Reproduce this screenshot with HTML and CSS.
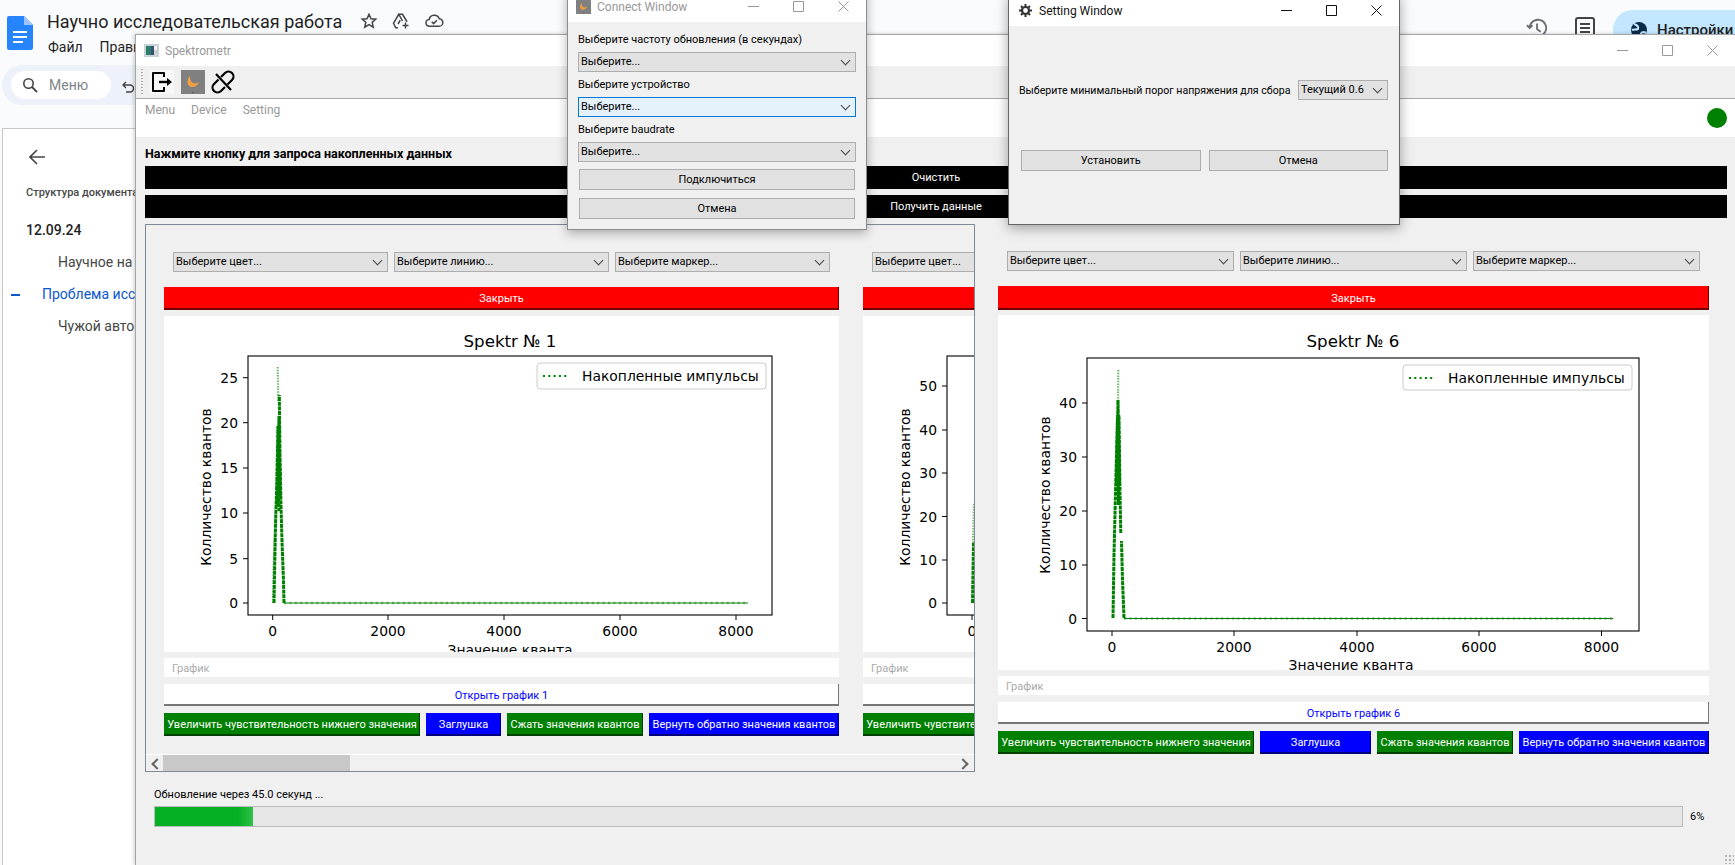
FILE: index.html
```html
<!DOCTYPE html>
<html lang="ru">
<head>
    <meta charset="UTF-8">
    <meta name="viewport" content="width=device-width, initial-scale=1.0">
    <title>Spektrometr</title>
    <link rel="stylesheet" href="styles.css">
</head>
<body>
    <svg class="defs" width="0" height="0">
        <symbol id="ctl-min" viewBox="0 0 11 11"><path d="M0 5.5h11" stroke="currentColor" fill="none"/></symbol>
        <symbol id="ctl-max" viewBox="0 0 11 11"><path d="M.5.5h10v10H.5z" stroke="currentColor" fill="none"/></symbol>
        <symbol id="ctl-close" viewBox="0 0 11 11"><path d="M.5.5l10 10M10.5.5l-10 10" stroke="currentColor" fill="none"/></symbol>
        <symbol id="app-logo" viewBox="0 0 24 24">
            <rect width="24" height="24" fill="#808080"/>
            <path d="M9 6c-4 4-3 11 2 11 3 0 6-2 7-5-2 1-4 2-6 1-2-1-3-3-3-7z" fill="#f0a040"/>
            <circle cx="12" cy="22.500" r="1" fill="#666"/>
        </symbol>
    </svg>

    <!-- Google Docs behind the windows -->
    <div class="docs">
        <div class="docs-head">
            <svg class="docs-logo" width="26" height="34" viewBox="0 0 26 34">
                <path d="M2 0h15l9 9v23a2 2 0 0 1-2 2H2a2 2 0 0 1-2-2V2a2 2 0 0 1 2-2z" fill="#2684fc"/>
                <path d="M17 0l9 9h-9z" fill="#a1c2fa"/>
                <path d="M6 16h14M6 21h14M6 26h10" stroke="#fff" stroke-width="2"/>
            </svg>
            <div class="docs-titles">
                <div class="docs-title-row">
                    <span class="docs-title">Научно исследовательская работа</span>
                    <svg class="docs-icon" width="18" height="18" viewBox="0 0 24 24"><path d="M12 3l2.7 6 6.3.6-4.8 4.2 1.5 6.4L12 16.8 6.300 20.200l1.500-6.400L3 9.600 9.300 9z" fill="none" stroke="#444" stroke-width="2"/></svg>
                    <svg class="docs-icon" width="20" height="18" viewBox="0 0 24 24"><path d="M9 3h5l6 10M8 21H5l-3-6L9 3l5 9M8 16l3-5" fill="none" stroke="#444" stroke-width="2"/><path d="M18 14v8M14 18h8" stroke="#444" stroke-width="2"/></svg>
                    <svg class="docs-icon" width="20" height="18" viewBox="0 0 24 24"><path d="M6 19a4.500 4.500 0 0 1-.5-9A7 7 0 0 1 19 9a5 5 0 0 1-.5 10z" fill="none" stroke="#444" stroke-width="2"/><path d="M9 13l2.500 2.500L16 11" fill="none" stroke="#444" stroke-width="2"/></svg>
                </div>
                <div class="docs-menu">
                    <span>Файл</span>
                    <span>Правка</span>
                </div>
            </div>
            <div class="docs-actions">
                <svg class="action-history" width="22" height="22" viewBox="0 0 24 24"><path d="M4 12a9 9 0 1 1 3 6.700M1 9l3 3 3-3M12 7v6l4 3" fill="none" stroke="#6b6f73" stroke-width="2"/></svg>
                <svg class="action-notes" width="20" height="22" viewBox="0 0 20 22"><rect x="1" y="1" width="18" height="20" rx="2" fill="none" stroke="#444" stroke-width="2"/><path d="M5 7h10M5 11h10M5 15h10" stroke="#444" stroke-width="2"/></svg>
                <div class="share-pill">
                    <svg width="18" height="18" viewBox="0 0 18 18"><circle cx="9" cy="9" r="8" fill="#0b2a4a"/><path d="M4 3c3 1 5 2 4 5-2 1-4 0-6 1M11 16c-1-3 0-5 3-5l2 1" fill="none" stroke="#c2e7ff" stroke-width="2"/></svg>
                    <span>Настройки</span>
                </div>
            </div>
        </div>
        <div class="docs-toolbar">
            <div class="docs-search">
                <svg width="16" height="16" viewBox="0 0 16 16"><circle cx="6.500" cy="6.500" r="4.700" fill="none" stroke="#444" stroke-width="1.600"/><path d="M10 10l5 5" stroke="#444" stroke-width="1.800"/></svg>
                <span>Меню</span>
            </div>
            <svg class="docs-undo" width="13" height="13" viewBox="0 0 13 13"><path d="M4 1L1 4l3 3M1 4h7a3.500 3.500 0 0 1 0 7H4" fill="none" stroke="#444" stroke-width="1.400"/></svg>
        </div>
        <div class="docs-side">
            <svg class="docs-back" width="16" height="16" viewBox="0 0 16 16"><path d="M8 1L1 8l7 7M1 8h15" fill="none" stroke="#444" stroke-width="1.600"/></svg>
            <div class="outline-head">Структура документа</div>
            <div class="outline-date">12.09.24</div>
            <div class="outline-item">Научное на</div>
            <div class="outline-item outline-active">Проблема исс</div>
            <div class="outline-item">Чужой авто</div>
        </div>
    </div>

    <!-- Main window -->
    <div class="win win-main">
        <div class="win-title">
            <svg class="win-icon" width="15" height="13" viewBox="0 0 15 13">
                <rect width="15" height="13" fill="#c9d2d6"/>
                <rect x="2" y="2" width="5" height="9" fill="#2a7f6a"/>
                <rect x="7" y="2" width="3" height="9" fill="#39506e"/>
                <rect x="10" y="2" width="3" height="4" fill="#f2f2f2"/>
            </svg>
            <span class="win-name">Spektrometr</span>
            <div class="win-ctls">
                <svg><use href="#ctl-min"/></svg>
                <svg><use href="#ctl-max"/></svg>
                <svg><use href="#ctl-close"/></svg>
            </div>
        </div>
        <div class="toolbar">
            <div class="tool-grip"></div>
            <div class="tool-btn">
                <svg width="22" height="22" viewBox="0 0 22 22"><path d="M13 6V2H2v18h11v-4" fill="none" stroke="#000" stroke-width="2" stroke-linejoin="round"/><path d="M8 11h9" stroke="#000" stroke-width="2.400"/><path d="M16 7l5 4-5 4z" fill="#000"/></svg>
            </div>
            <svg class="tool-logo" width="24" height="24"><use href="#app-logo"/></svg>
            <svg class="tool-link" width="24" height="24" viewBox="0 0 24 24">
                <path d="M10 7l4-4a4.700 4.700 0 0 1 7 7l-4.500 4.500M14 17l-4 4a4.700 4.700 0 0 1-7-7l4.500-4.500" fill="none" stroke="#000" stroke-width="2.200"/>
                <path d="M5 4l15 16" stroke="#000" stroke-width="2.200"/>
            </svg>
        </div>
        <div class="menubar">
            <span>Menu</span>
            <span>Device</span>
            <span>Setting</span>
            <div class="status-dot"></div>
        </div>

        <div class="content">
            <div class="hint">Нажмите кнопку для запроса накопленных данных</div>
            <button class="btn-black">Очистить</button>
            <button class="btn-black">Получить данные</button>

            <div class="panes">
                <div class="scroll-panel">
                    <div class="scroll-view">
                        <div class="card">
                            <div class="combo-row">
                                <div class="combo">Выберите цвет...</div>
                                <div class="combo">Выберите линию...</div>
                                <div class="combo">Выберите маркер...</div>
                            </div>
                            <button class="btn-red">Закрыть</button>
                            <div class="plot plot-short">
                                <svg width="675" height="336" viewBox="0 0 675 336">
                                    <text class="plot-title" x="346" y="31">Spektr № 1</text>
                                    <path class="ticks" d="M79 287h5M79 242.700h5M79 197h5M79 152h5M79 106.700h5M79 61.700h5M108.700 299v5M224 299v5M340 299v5M456 299v5M572 299v5"/>
                                    <g class="ytick">
                                        <text x="74" y="292">0</text>
                                        <text x="74" y="248">5</text>
                                        <text x="74" y="202">10</text>
                                        <text x="74" y="157">15</text>
                                        <text x="74" y="112">20</text>
                                        <text x="74" y="67">25</text>
                                    </g>
                                    <g class="xtick">
                                        <text x="108.700" y="320">0</text>
                                        <text x="224" y="320">2000</text>
                                        <text x="340" y="320">4000</text>
                                        <text x="456" y="320">6000</text>
                                        <text x="572" y="320">8000</text>
                                    </g>
                                    <text class="axis-label" x="346" y="339">Значение кванта</text>
                                    <text class="axis-label" transform="translate(47 171) rotate(-90)">Колличество квантов</text>
                                    <polyline class="line-faint" points="113.700,51 114.300,85"/>
                                    <polyline class="line-faint" points="109,287 109.500,255 112,190 113.500,110"/>
                                    <polyline class="line-heavy" points="110,287 110.500,260 111.500,210 113,160 114,110"/>
                                    <polyline class="line-heavy" points="120,287 119.500,265 118,225 117,190 116,140 115.300,79"/>
                                    <polyline class="line-heavy" points="113.500,190 115,100 116,180 114.500,130 115,195"/>
                                    <path class="line-base" d="M120 287H584"/>
                                    <path class="line-dots" d="M120 287H584"/>
                                    <rect class="axes" x="84" y="40" width="524" height="259"/>
                                    <rect class="legend-box" x="373" y="47" width="229" height="26" rx="3"/>
                                    <path class="legend-line" d="M379 60h24"/>
                                    <text class="legend-text" x="418" y="65">Накопленные импульсы</text>
                                </svg>
                            </div>
                            <div class="tab-bar"><span class="tab">График</span></div>
                            <button class="btn-open">Открыть график 1</button>
                            <div class="action-row">
                                <button class="act act-green act-long">Увеличить чувствительность нижнего значения</button>
                                <button class="act act-blue act-fill">Заглушка</button>
                                <button class="act act-green act-squeeze">Сжать значения квантов</button>
                                <button class="act act-blue act-back">Вернуть обратно значения квантов</button>
                            </div>
                        </div>

                        <!-- only the left edge of this card shows before the panel clips it -->
                        <div class="card">
                            <div class="combo-row">
                                <div class="combo">Выберите цвет...</div>
                            </div>
                            <button class="btn-red"></button>
                            <div class="plot plot-short">
                                <svg width="675" height="336" viewBox="0 0 675 336">
                                    <path class="ticks" d="M79 287h5M79 244h5M79 200.500h5M79 157h5M79 114h5M79 70h5M109 299v5"/>
                                    <g class="ytick">
                                        <text x="74" y="292">0</text>
                                        <text x="74" y="249">10</text>
                                        <text x="74" y="206">20</text>
                                        <text x="74" y="162">30</text>
                                        <text x="74" y="119">40</text>
                                        <text x="74" y="75">50</text>
                                    </g>
                                    <g class="xtick">
                                        <text x="109" y="320">0</text>
                                    </g>
                                    <text class="axis-label" transform="translate(47 171) rotate(-90)">Колличество квантов</text>
                                    <polyline class="line-faint" points="110,227 111,187"/>
                                    <polyline class="line-heavy" points="109.500,287 110.500,227"/>
                                    <rect class="axes" x="84" y="40" width="524" height="259"/>
                                </svg>
                            </div>
                            <div class="tab-bar"><span class="tab">График</span></div>
                            <button class="btn-open"></button>
                            <div class="action-row">
                                <button class="act act-green act-long">Увеличить чувствительность нижнего значения</button>
                            </div>
                        </div>
                    </div>
                    <div class="scrollbar">
                        <span class="arrow arrow-left"></span>
                        <div class="thumb"></div>
                        <span class="arrow arrow-right"></span>
                    </div>
                </div>

                <div class="card card-wide">
                    <div class="combo-row">
                        <div class="combo">Выберите цвет...</div>
                        <div class="combo">Выберите линию...</div>
                        <div class="combo">Выберите маркер...</div>
                    </div>
                    <button class="btn-red btn-red-tall">Закрыть</button>
                    <div class="plot plot-tall">
                        <svg width="711" height="355" viewBox="0 0 711 355">
                            <text class="plot-title" x="355" y="32">Spektr № 6</text>
                            <path class="ticks" d="M84 303.500h5M84 250h5M84 196h5M84 142h5M84 88h5M114 316v5M236 316v5M359 316v5M481 316v5M603.500 316v5"/>
                            <g class="ytick">
                                <text x="79" y="309">0</text>
                                <text x="79" y="255">10</text>
                                <text x="79" y="201">20</text>
                                <text x="79" y="147">30</text>
                                <text x="79" y="93">40</text>
                            </g>
                            <g class="xtick">
                                <text x="114" y="337">0</text>
                                <text x="236" y="337">2000</text>
                                <text x="359" y="337">4000</text>
                                <text x="481" y="337">6000</text>
                                <text x="603.500" y="337">8000</text>
                            </g>
                            <text class="axis-label" x="353" y="355">Значение кванта</text>
                            <text class="axis-label" transform="translate(52 180) rotate(-90)">Колличество квантов</text>
                            <polyline class="line-faint" points="120.300,55 120,90"/>
                            <polyline class="line-heavy" points="115,303 116,240 117.500,178 119.500,100"/>
                            <polyline class="line-heavy" points="126,303 124.500,265 123.500,226"/>
                            <polyline class="line-heavy" points="122.800,218 122,178 121,100"/>
                            <polyline class="line-heavy" points="118.500,170 120,85 121.500,170 119.500,120 120.500,190 120,140"/>
                            <path class="line-base" d="M126 303.500H615"/>
                            <path class="line-dots" d="M126 303.500H615"/>
                            <rect class="axes" x="89" y="43" width="552" height="273"/>
                            <rect class="legend-box" x="405" y="50" width="229" height="25" rx="3"/>
                            <path class="legend-line" d="M411 63h24"/>
                            <text class="legend-text" x="450" y="68">Накопленные импульсы</text>
                        </svg>
                    </div>
                    <div class="tab-bar"><span class="tab">График</span></div>
                    <button class="btn-open">Открыть график 6</button>
                    <div class="action-row">
                        <button class="act act-green act-long">Увеличить чувствительность нижнего значения</button>
                        <button class="act act-blue act-fill">Заглушка</button>
                        <button class="act act-green act-squeeze">Сжать значения квантов</button>
                        <button class="act act-blue act-back">Вернуть обратно значения квантов</button>
                    </div>
                </div>
            </div>

            <div class="update-text">Обновление через 45.0 секунд ...</div>
            <div class="progress-row">
                <div class="progress"><div class="progress-fill" style="width: 6.4%"></div></div>
                <span class="progress-value">6%</span>
            </div>
        </div>
        <div class="size-grip"></div>
    </div>

    <!-- Connect window -->
    <div class="win win-connect">
        <div class="win-title">
            <svg class="win-icon" width="15" height="15"><use href="#app-logo"/></svg>
            <span class="win-name">Connect Window</span>
            <div class="win-ctls">
                <svg><use href="#ctl-min"/></svg>
                <svg><use href="#ctl-max"/></svg>
                <svg><use href="#ctl-close"/></svg>
            </div>
        </div>
        <div class="connect-body">
            <div class="form-label">Выберите частоту обновления (в секундах)</div>
            <div class="combo">Выберите...</div>
            <div class="form-label">Выберите устройство</div>
            <div class="combo combo-focus">Выберите...</div>
            <div class="form-label">Выберите baudrate</div>
            <div class="combo">Выберите...</div>
            <button class="btn-plain connect-ok">Подключиться</button>
            <button class="btn-plain connect-cancel">Отмена</button>
        </div>
    </div>

    <!-- Setting window -->
    <div class="win win-setting">
        <div class="win-title">
            <svg class="win-icon" width="15" height="15" viewBox="0 0 15 15">
                <circle cx="7.500" cy="7.500" r="3.500" fill="none" stroke="#333" stroke-width="2.200"/>
                <path d="M7.500 1v2.500M7.500 11.500V14M1 7.500h2.500M11.500 7.500H14M3 3l1.700 1.700M10.300 10.300L12 12M12 3l-1.700 1.700M4.700 10.300L3 12" stroke="#333" stroke-width="2"/>
            </svg>
            <span class="win-name">Setting Window</span>
            <div class="win-ctls">
                <svg><use href="#ctl-min"/></svg>
                <svg><use href="#ctl-max"/></svg>
                <svg><use href="#ctl-close"/></svg>
            </div>
        </div>
        <div class="setting-body">
            <div class="setting-row">
                <span class="setting-label">Выберите минимальный порог напряжения для сбора</span>
                <div class="combo combo-small">Текущий 0.6</div>
            </div>
            <div class="setting-btns">
                <button class="btn-plain">Установить</button>
                <button class="btn-plain">Отмена</button>
            </div>
        </div>
    </div>
</body>
</html>
```

FILE: styles.css
```css
* {
    box-sizing: border-box;
}
html, body {
    height: 100%;
}
body {
    margin: 0;
    position: relative;
    overflow: hidden;
    background-color: #f9fbfd;
    font-family: Roboto, "Liberation Sans", sans-serif;
    font-size: 11px;
    color: #000;
}
button {
    font-family: inherit;
    font-size: 11px;
    padding: 0;
    border: none;
}
.defs {
    position: absolute;
}

/* Google Docs behind */
.docs {
    height: 100%;
    display: flex;
    flex-direction: column;
    color: #1f1f1f;
}
.docs-head {
    display: flex;
    height: 65px;
    padding: 16px 0 0 7px;
}
.docs-logo {
    flex: none;
}
.docs-titles {
    margin-left: 14px;
    margin-top: -8px;
}
.docs-title-row {
    display: flex;
    align-items: center;
    height: 26px;
}
.docs-title {
    font-size: 18px;
    margin-right: 18px;
}
.docs-icon {
    margin-right: 13px;
}
.docs-menu {
    display: flex;
    gap: 17px;
    margin-top: 3px;
    padding-left: 1px;
    font-size: 14px;
    line-height: 20px;
}
.docs-actions {
    position: absolute;
    top: 10px;
    left: 1526px;
    right: 0;
    display: flex;
    align-items: flex-start;
}
.action-history {
    margin-top: 7px;
}
.action-notes {
    margin: 7px 0 0 27px;
}
.share-pill {
    display: flex;
    align-items: center;
    gap: 9px;
    height: 40px;
    margin-left: 18px;
    padding-left: 17px;
    flex: 1;
    border-radius: 20px 0 0 20px;
    background-color: #c2e7ff;
    font-size: 15px;
    font-weight: 500;
    white-space: nowrap;
    overflow: hidden;
}
.docs-toolbar {
    display: flex;
    align-items: center;
    height: 40px;
    margin-left: 2px;
    padding-left: 9px;
    border-radius: 20px 0 0 20px;
    background-color: #edf2fa;
}
.docs-search {
    display: flex;
    align-items: center;
    gap: 11px;
    width: 100px;
    height: 28px;
    padding-left: 11px;
    border-radius: 14px;
    background-color: #fff;
    font-size: 14px;
    color: #80868b;
}
.docs-undo {
    margin-left: 11px;
    margin-top: 4px;
}
.docs-side {
    flex: 1;
    margin: 23px 0 0 2px;
    border: 1px solid #c7c7c7;
    border-bottom: none;
    background-color: #fff;
    padding: 20px 0 0 23px;
    white-space: nowrap;
}
.docs-back {
    display: block;
    margin-left: 3px;
}
.outline-head {
    margin-top: 21px;
    font-size: 11px;
    font-weight: 500;
    color: #444746;
}
.outline-date {
    margin-top: 23px;
    font-size: 14px;
    font-weight: 500;
    line-height: 16px;
}
.outline-item {
    position: relative;
    margin: 16px 0 0 32px;
    font-size: 14px;
    line-height: 16px;
    color: #444746;
}
.outline-active {
    margin-left: 16px;
    color: #0b57d0;
}
.outline-active::before {
    content: "";
    position: absolute;
    left: -31px;
    top: 8px;
    width: 9px;
    height: 2px;
    background-color: #0b57d0;
}

/* Windows */
.win {
    position: absolute;
    display: flex;
    flex-direction: column;
    background-color: #f0f0f0;
    border: 1px solid #8c8c8c;
}
.win-main {
    left: 135px;
    top: 34px;
    right: 0;
    bottom: 0;
    border-color: #a6a6a6;
    border-right: none;
    border-bottom: none;
    box-shadow: -1px 0 4px rgba(0, 0, 0, 0.2);
}
.win-connect {
    left: 567px;
    top: -10px;
    width: 300px;
    height: 240px;
    box-shadow: 0 3px 10px rgba(0, 0, 0, 0.3);
}
.win-setting {
    left: 1008px;
    top: -6px;
    width: 392px;
    height: 231px;
    border-color: #666;
    box-shadow: 0 3px 12px rgba(0, 0, 0, 0.35);
}
.win-title {
    display: flex;
    align-items: center;
    flex: none;
    height: 31px;
    padding-left: 8px;
    background-color: #fff;
}
.win-icon {
    flex: none;
    margin-right: 6px;
}
.win-name {
    font-size: 12px;
    color: #999;
}
.win-ctls {
    display: flex;
    margin-left: auto;
    color: #999;
}
.win-ctls svg {
    width: 45px;
    height: 11px;
}
.win-setting .win-name,
.win-setting .win-ctls {
    color: #111;
}
.win-setting .win-title {
    padding-left: 9px;
}

/* Main window */
.toolbar {
    display: flex;
    align-items: center;
    flex: none;
    height: 33px;
    padding-left: 5px;
    border-bottom: 1px solid #a9a9a9;
}
.tool-grip {
    width: 2px;
    height: 27px;
    background-image: linear-gradient(#aaa 50%, transparent 50%);
    background-size: 2px 3px;
}
.tool-btn {
    display: flex;
    align-items: center;
    justify-content: center;
    width: 24px;
    height: 24px;
    margin-left: 7px;
    background-color: #f8f8f8;
}
.tool-logo {
    margin-left: 7px;
}
.tool-link {
    margin-left: 6px;
}
.menubar {
    display: flex;
    flex: none;
    gap: 16px;
    height: 38px;
    padding: 2px 8px 0 9px;
    background-color: #fff;
    color: #999;
    font-size: 12px;
    line-height: 18px;
}
.status-dot {
    width: 20px;
    height: 20px;
    margin: 7px 0 0 auto;
    border-radius: 50%;
    background-color: #008000;
}
.content {
    display: flex;
    flex-direction: column;
    flex: 1;
    min-height: 0;
    padding: 9px 8px 0 9px;
}
.hint {
    height: 16px;
    margin-bottom: 4px;
    font-size: 12.500px;
    font-weight: 700;
    line-height: 16px;
}
.btn-black {
    flex: none;
    height: 23px;
    margin-bottom: 6px;
    background-color: #000;
    color: #fff;
}
.panes {
    display: flex;
    gap: 23px;
    flex: none;
    height: 548px;
}
.scroll-panel {
    display: flex;
    flex-direction: column;
    flex: none;
    width: 830px;
    border: 1px solid #7f8a96;
}
.scroll-view {
    display: flex;
    gap: 24px;
    flex: 1;
    min-height: 0;
    padding: 27px 0 0 18px;
    overflow: hidden;
    border-bottom: 1px solid #fff;
}
.scrollbar {
    display: flex;
    align-items: center;
    flex: none;
    height: 16px;
    background-color: #f0f0f0;
}
.arrow {
    flex: none;
    width: 17px;
    height: 16px;
    position: relative;
}
.arrow::after {
    content: "";
    position: absolute;
    top: 5px;
    width: 6px;
    height: 6px;
    border-left: 2px solid #666;
    border-bottom: 2px solid #666;
}
.arrow-left::after {
    left: 7px;
    transform: rotate(45deg);
}
.arrow-right {
    margin-left: auto;
}
.arrow-right::after {
    left: 2px;
    transform: rotate(225deg);
}
.thumb {
    width: 187px;
    height: 16px;
    background-color: #c8c8c8;
}

/* Spectrum card */
.card {
    display: flex;
    flex-direction: column;
    flex: none;
    width: 675px;
}
.card-wide {
    width: 711px;
    margin-top: 27px;
}
.combo-row {
    display: flex;
    gap: 6px;
    flex: none;
    padding: 0 9px;
    margin-bottom: 15px;
}
.combo-row .combo {
    flex: 1;
}
.combo {
    position: relative;
    flex: none;
    height: 20px;
    padding-left: 2px;
    border: 1px solid #adadad;
    background-color: #e1e1e1;
    line-height: 18px;
    white-space: nowrap;
    overflow: hidden;
}
.combo::after {
    content: "";
    position: absolute;
    right: 6px;
    top: 4px;
    width: 6px;
    height: 6px;
    border-right: 1px solid #444;
    border-bottom: 1px solid #444;
    transform: rotate(45deg);
}
.combo-focus {
    border-color: #0078d7;
    background-color: #e5f1fb;
}
.combo-small {
    width: 90px;
}
.btn-red {
    flex: none;
    height: 23px;
    background-color: #f00;
    color: #fff;
    box-shadow: inset -1px -2px 0 #700000;
}
.btn-red-tall {
    height: 24px;
}
.plot {
    flex: none;
    margin-top: 6px;
    background-color: #fff;
    overflow: hidden;
}
.plot svg {
    display: block;
}
.plot-short {
    height: 336px;
}
.plot-tall {
    height: 355px;
    margin-top: 5px;
}
.plot-title,
.ytick text,
.xtick text,
.axis-label,
.legend-text {
    font-family: "DejaVu Sans", sans-serif;
    fill: #000;
}
.plot-title {
    font-size: 16.67px;
    text-anchor: middle;
}
.ytick text {
    font-size: 13.89px;
    text-anchor: end;
}
.xtick text {
    font-size: 13.89px;
    text-anchor: middle;
}
.axis-label {
    font-size: 13.89px;
    text-anchor: middle;
}
.legend-text {
    font-size: 13.89px;
}
.ticks {
    stroke: #000;
    stroke-width: 1;
    fill: none;
}
.axes {
    fill: none;
    stroke: #000;
    stroke-width: 1.1;
}
.legend-box {
    fill: rgba(255, 255, 255, 0.8);
    stroke: #ccc;
}
.legend-line {
    stroke: #008000;
    stroke-width: 2;
    stroke-dasharray: 2 3.300;
}
.line-faint {
    fill: none;
    stroke: #008000;
    stroke-width: 2.200;
    stroke-opacity: 0.55;
    stroke-dasharray: 1.500 1.200;
}
.line-heavy {
    fill: none;
    stroke: #008000;
    stroke-width: 3;
    stroke-dasharray: 4 0.700;
}
.line-base {
    stroke: #008000;
    stroke-width: 1.200;
}
.line-dots {
    stroke: #008000;
    stroke-opacity: 0.45;
    stroke-width: 2.400;
    stroke-dasharray: 2 3.400;
}
.tab-bar {
    flex: none;
    height: 19px;
    margin-top: 6px;
    padding-left: 8px;
    background-color: #fff;
}
.tab {
    color: #aaa;
    line-height: 22px;
}
.btn-open {
    flex: none;
    height: 22px;
    margin-top: 7px;
    background-color: #fff;
    color: #00f;
    box-shadow: inset -1px -2px 0 #777;
}
.action-row {
    display: flex;
    gap: 6px;
    flex: none;
    margin-top: 7px;
}
.act {
    flex: none;
    height: 23px;
    color: #fff;
    white-space: nowrap;
}
.act-green {
    background-color: #008000;
    box-shadow: inset -1px -2px 0 #004000;
}
.act-blue {
    background-color: #00f;
    box-shadow: inset -1px -2px 0 #00007f;
}
.act-long {
    width: 256px;
}
.act-fill {
    flex: 1;
}
.act-squeeze {
    width: 136px;
}
.act-back {
    width: 190px;
}
.update-text {
    height: 16px;
    margin-top: 15px;
    padding-left: 9px;
    line-height: 16px;
}
.progress-row {
    display: flex;
    align-items: center;
    margin-top: 3px;
    padding-left: 9px;
}
.progress {
    flex: none;
    width: 1529px;
    height: 21px;
    border: 1px solid #bcbcbc;
    background-color: #e6e6e6;
}
.progress-fill {
    height: 100%;
    background-image: linear-gradient(to right, #06b025 85%, #2fc04a);
}
.progress-value {
    margin-left: 7px;
}
.size-grip {
    position: absolute;
    right: 1px;
    bottom: 1px;
    width: 10px;
    height: 10px;
    background-image: radial-gradient(#b5b5b5 1px, transparent 1.200px);
    background-size: 4px 4px;
}

/* Connect window */
.connect-body {
    display: flex;
    flex-direction: column;
    flex: 1;
    padding: 10px 10px 0;
}
.form-label {
    height: 16px;
    margin-bottom: 4px;
    line-height: 16px;
}
.form-label ~ .form-label {
    margin-top: 5px;
}
.btn-plain {
    height: 21px;
    border: 1px solid #adadad;
    background-color: #e1e1e1;
    color: #000;
}
.connect-ok {
    margin: 7px 1px 0;
}
.connect-cancel {
    margin: 8px 1px 0;
}

/* Setting window */
.setting-body {
    flex: 1;
    padding: 54px 11px 0 10px;
}
.setting-row {
    display: flex;
    align-items: center;
    justify-content: space-between;
    height: 20px;
}
.setting-label {
    font-size: 10.600px;
    white-space: nowrap;
}
.setting-btns {
    display: flex;
    gap: 8px;
    margin-top: 50px;
    padding-left: 2px;
}
.setting-btns .btn-plain {
    flex: 1;
}
```
